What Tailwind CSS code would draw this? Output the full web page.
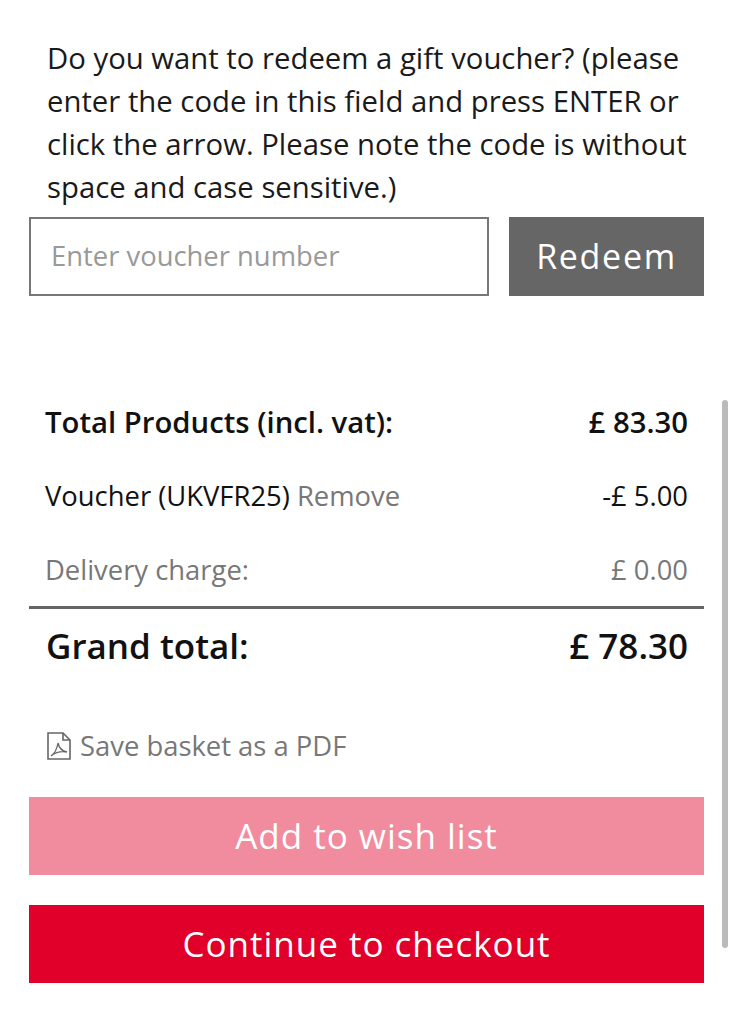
<!DOCTYPE html>
<html lang="en">
<head>
    <meta charset="UTF-8">
    <meta name="viewport" content="width=device-width, initial-scale=1.0">
    <title>Basket</title>
    <script src="https://cdn.jsdelivr.net/npm/@tailwindcss/browser@4"></script>
</head>
<body class="bg-white font-['Open_Sans',sans-serif] relative h-[1024px] overflow-hidden">
    <div class="pl-[29px] pr-[30px] pt-[37px]">
        <p class="pl-[18px] text-[29.3px] leading-[43px] text-[#1a1a1a]">Do you want to redeem a gift voucher? (please enter the code in this field and press ENTER or click the arrow. Please note the code is without space and case sensitive.)</p>
        <div class="flex justify-between mt-[8px]">
            <div class="w-[460px] h-[79px] border-2 border-[#777] flex items-center pl-[20px] pb-[1px] text-[27.4px] text-[#999]">Enter voucher number</div>
            <div class="w-[195px] h-[79px] bg-[#666] text-white text-[34px] tracking-[1.7px] flex items-center justify-center">Redeem</div>
        </div>

        <div class="mt-[104px] pr-[16px] text-[#111]">
            <div class="flex justify-between pl-[16px] h-[44px] items-center text-[29.3px] font-semibold pt-[1px]">
                <span>Total Products (incl. vat):</span>
                <span>£ 83.30</span>
            </div>
            <div class="flex justify-between pl-[16px] h-[44px] items-center text-[27.4px] mt-[30px]">
                <span>Voucher (UKVFR25) <span class="text-[#777]">Remove</span></span>
                <span>-£ 5.00</span>
            </div>
            <div class="flex justify-between pl-[16px] h-[44px] items-center text-[27.4px] mt-[30px] text-[#777]">
                <span>Delivery charge:</span>
                <span>£ 0.00</span>
            </div>
        </div>
        <div class="border-t-[3px] border-[#666] mt-[14px]"></div>
        <div class="flex justify-between pl-[17px] pr-[16px] h-[74px] items-center text-[35px] font-semibold text-[#111]">
            <span>Grand total:</span>
            <span>£ 78.30</span>
        </div>

        <div class="flex items-center pl-[18px] mt-[41px] h-[44px] text-[27.4px] text-[#777]">
            <svg class="w-[24px] h-[28px] mr-[9px]" viewBox="0 0 24 28" fill="none" stroke="#666" stroke-width="1.6">
                <path d="M1 1h15l7 7v19H1z"/>
                <path d="M16 1v7h7"/>
                <path d="M4 24c3-2 6-7 7-13 1 5 4 8 9 9-6-1-11 0-16 4z" stroke-width="1.3"/>
            </svg>
            <span>Save basket as a PDF</span>
        </div>

        <div class="mt-[29px] h-[78px] bg-[#f18c9e] text-white text-[35px] tracking-[1px] flex items-center justify-center">Add to wish list</div>
        <div class="mt-[30px] h-[78px] bg-[#e0002a] text-white text-[35px] tracking-[1px] flex items-center justify-center">Continue to checkout</div>
    </div>
    <div class="absolute left-[722px] top-[400px] w-[6px] h-[548px] rounded-full bg-[#bbb]"></div>
</body>
</html>
